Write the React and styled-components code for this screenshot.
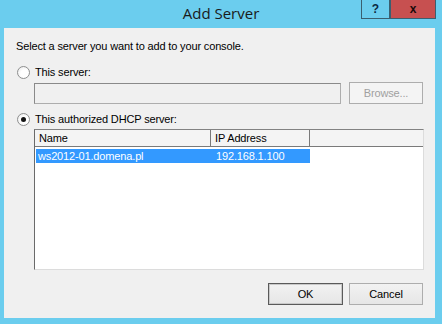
import React from 'react';
import styled, { createGlobalStyle } from 'styled-components';

const GlobalStyle = createGlobalStyle`
  html, body {
    margin: 0;
    padding: 0;
    background: #6bcdee;
  }
`;

const Window = styled.div`
  width: 442px;
  height: 324px;
  background: #6bcdee;
  display: flex;
  flex-direction: column;
  overflow: hidden;
`;

const TitleBar = styled.div`
  height: 28px;
  display: grid;
  grid-template-columns: 1fr auto 1fr;
  align-items: start;
`;

const Title = styled.div`
  grid-column: 2;
  font-family: 'Open Sans', 'Noto Sans', sans-serif;
  font-size: 15px;
  line-height: 15px;
  margin-top: 6px;
  color: #1a1a1a;
`;

const Controls = styled.div`
  grid-column: 3;
  justify-self: end;
  display: flex;
  margin-right: 6px;
`;

const CaptionButton = styled.div`
  height: 19px;
  width: ${p => p.w}px;
  box-sizing: border-box;
  border: 1px solid #3a5f70;
  border-top: none;
  background: ${p => p.bg};
  display: flex;
  align-items: center;
  justify-content: center;
  font-family: 'Liberation Sans', Arial, sans-serif;
  font-weight: bold;
  font-size: 12px;
  color: ${p => p.fg};
`;

const Client = styled.div`
  flex: 1;
  margin: 0 7px 6px 4px;
  background: #f0f0f0;
  font-family: 'Liberation Sans', Arial, sans-serif;
  font-size: 11px;
  letter-spacing: -0.15px;
  color: #000;
  display: flex;
  flex-direction: column;
  padding: 12px 12px 0 12px;
`;

const Intro = styled.div`
  line-height: 13px;
`;

const RadioRow = styled.div`
  display: flex;
  align-items: center;
  gap: 5px;
  margin-top: ${p => p.mt}px;
  margin-left: 1px;
  line-height: 13px;
`;

const RadioDot = styled.span`
  width: 13px;
  height: 13px;
  box-sizing: border-box;
  border-radius: 50%;
  border: 1px solid #8e8f8f;
  background: radial-gradient(circle at 60% 60%, #ffffff 40%, #e6e6e6 100%);
  display: flex;
  align-items: center;
  justify-content: center;
  &::after {
    content: '';
    width: 5px;
    height: 5px;
    border-radius: 50%;
    background: ${p => (p.checked ? '#141414' : 'transparent')};
  }
`;

const InputRow = styled.div`
  display: flex;
  align-items: center;
  margin-top: 3px;
  margin-left: 18px;
  gap: 8px;
`;

const TextBox = styled.div`
  width: 307px;
  height: 21px;
  box-sizing: border-box;
  border: 1px solid #adadad;
  border-top-color: #8a8a8a;
  border-left-color: #8a8a8a;
  background: #f0f0f0;
`;

const Button = styled.div`
  width: ${p => p.w}px;
  height: 22px;
  box-sizing: border-box;
  border: 1px solid ${p => (p.primary ? '#5a5a5a' : '#adadad')};
  ${p => p.primary && 'box-shadow: inset 0 0 0 1px #c9c9c9;'}
  background: ${p => (p.disabled ? '#f4f4f4' : 'linear-gradient(#f2f2f2, #e6e6e6)')};
  color: ${p => (p.disabled ? '#a0a0a0' : '#000')};
  display: flex;
  align-items: center;
  justify-content: center;
  font-size: 11px;
`;

const List = styled.div`
  margin-top: 3px;
  margin-left: 18px;
  width: 390px;
  height: 141px;
  box-sizing: border-box;
  border: 1px solid #dcdcdc;
  border-top-color: #828282;
  border-left-color: #6a6a6a;
  background: #fff;
  display: flex;
  flex-direction: column;
`;

const HeaderRow = styled.div`
  display: flex;
  height: 17px;
  box-sizing: border-box;
  border-bottom: 1px solid #7a7a7a;
  background: #f4f4f4;
`;

const HeaderCell = styled.div`
  width: ${p => p.w}px;
  flex: ${p => (p.w ? 'none' : 1)};
  box-sizing: border-box;
  border-right: ${p => (p.w ? '1px solid #7a7a7a' : 'none')};
  padding-left: 4px;
  line-height: 16px;
`;

const Row = styled.div`
  display: flex;
  margin: 2px 0 0 1px;
  width: 274px;
  height: 14px;
  background: ${p => (p.selected ? '#3399ff' : 'transparent')};
  color: ${p => (p.selected ? '#fff' : '#000')};
  line-height: 14px;
`;

const Cell = styled.div`
  width: ${p => p.w}px;
  padding-left: ${p => p.pl}px;
  box-sizing: border-box;
`;

const Footer = styled.div`
  display: flex;
  justify-content: flex-end;
  gap: 6px;
  margin-top: 13px;
`;

export default function App() {
  return (
    <>
      <GlobalStyle />
      <Window>
        <TitleBar>
          <Title>Add Server</Title>
          <Controls>
            <CaptionButton w={29} bg="#6bcdee" fg="#0c2a44">?</CaptionButton>
            <CaptionButton w={46} bg="#c75050" fg="#1a0a0a">x</CaptionButton>
          </Controls>
        </TitleBar>
        <Client>
          <Intro>Select a server you want to add to your console.</Intro>
          <RadioRow mt={13}>
            <RadioDot />
            <span>This server:</span>
          </RadioRow>
          <InputRow>
            <TextBox />
            <Button w={74} disabled>Browse...</Button>
          </InputRow>
          <RadioRow mt={9}>
            <RadioDot checked />
            <span>This authorized DHCP server:</span>
          </RadioRow>
          <List>
            <HeaderRow>
              <HeaderCell w={176}>Name</HeaderCell>
              <HeaderCell w={99}>IP Address</HeaderCell>
              <HeaderCell />
            </HeaderRow>
            <Row selected>
              <Cell w={180} pl={2}>ws2012-01.domena.pl</Cell>
              <Cell w={94} pl={0}>192.168.1.100</Cell>
            </Row>
          </List>
          <Footer>
            <Button w={75} primary>OK</Button>
            <Button w={74}>Cancel</Button>
          </Footer>
        </Client>
      </Window>
    </>
  );
}
